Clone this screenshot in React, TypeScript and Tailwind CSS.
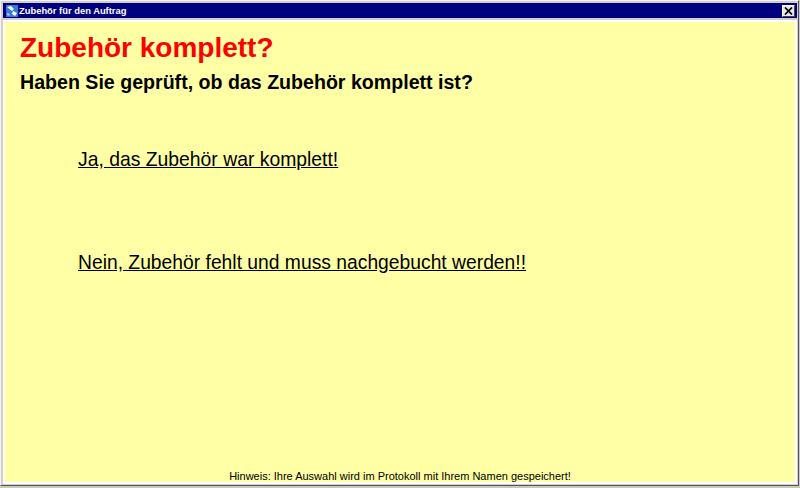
import React from 'react';

const App: React.FC = () => {
    return (
        <div className="w-[800px] h-[488px] overflow-hidden flex flex-col bg-[#c8c8c8] pr-[1px] pb-[2px] font-['Liberation_Sans',Arial,sans-serif]">
            <div className="flex-1 min-h-0 flex flex-col bg-[#d4d0c8] border-t border-l border-r border-b border-t-[#f4f4f4] border-l-[#f4f4f4] border-r-[#555555] border-b-[#555555] pt-[2px] pl-[2px] pr-[1px] pb-[1px]">
                {/* Title bar */}
                <div className="h-[15px] shrink-0 bg-[#00007f] flex items-center pl-[2px] pr-[2px]">
                    <svg width="14" height="14" viewBox="0 0 14 14" className="shrink-0">
                        <rect x="1" y="1" width="12" height="12" fill="#3a78d8" />
                        <path d="M2 3l4-1 3 3-2 2zM8 7l4 2-2 3-3-2z" fill="#ffffff" />
                        <path d="M2 9l3 1-1 2-2-1z" fill="#a8c8f0" />
                    </svg>
                    <span className="text-[9.4px] leading-[15px] font-bold text-white whitespace-nowrap">Zubehör für den Auftrag</span>
                    <button className="ml-auto w-[13px] h-[12px] bg-[#e8e8e8] border border-t-white border-l-white border-r-[#444444] border-b-[#444444] flex items-center justify-center">
                        <svg width="9" height="8" viewBox="0 0 9 8">
                            <path d="M1 0.5l7 7M8 0.5l-7 7" stroke="#000000" strokeWidth="1.7" />
                        </svg>
                    </button>
                </div>
                {/* Body */}
                <div className="flex-1 min-h-0 mt-[2px] bg-white pl-[2px] pt-[2px] pr-[2px] pb-[2px] flex">
                    <div className="flex-1 bg-[#ffffa5] flex flex-col pl-[15px]">
                        <h1 className="mt-[9px] text-[28px] leading-[33px] font-bold text-[#ff0000]">Zubehör komplett?</h1>
                        <h2 className="mt-[6px] text-[19.6px] leading-[24px] font-bold text-black">Haben Sie geprüft, ob das Zubehör komplett ist?</h2>
                        <div className="mt-[53px] ml-[58px] text-[19.35px] leading-[24px] text-black underline">Ja, das Zubehör war komplett!</div>
                        <div className="mt-[80px] ml-[58px] text-[19.3px] leading-[24px] text-black underline">Nein, Zubehör fehlt und muss nachgebucht werden!!</div>
                        <div className="mt-auto -ml-[15px] mb-[-1px] text-center text-[11px] leading-[14px] text-black">Hinweis: Ihre Auswahl wird im Protokoll mit Ihrem Namen gespeichert!</div>
                    </div>
                </div>
            </div>
        </div>
    );
};

export default App;
